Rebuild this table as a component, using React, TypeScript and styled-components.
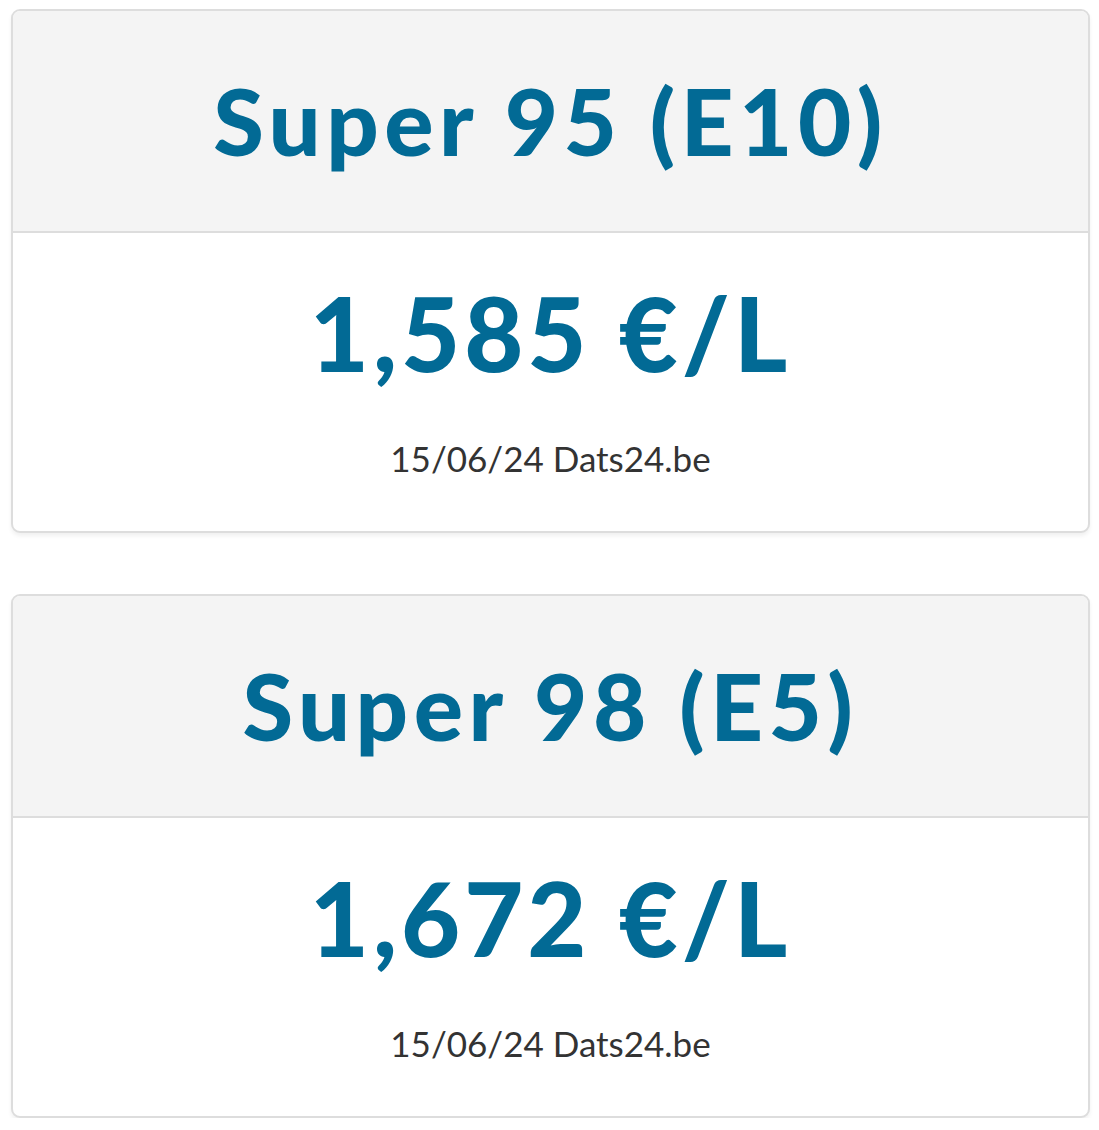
import React from 'react';
import styled, {createGlobalStyle} from "styled-components";

const GlobalStyle = createGlobalStyle`
    body {
        margin: 0;
        background: #ffffff;
        font-family: Lato, "Open Sans", sans-serif;
    }
`

type Fuel = {
    name: string;
    price: string;
    date: string;
    source: string;
}

const fuels: Fuel[] = [
    {name: "Super 95 (E10)", price: "1,585 €/L", date: "15/06/24", source: "Dats24.be"},
    {name: "Super 98 (E5)", price: "1,672 €/L", date: "15/06/24", source: "Dats24.be"},
];

export default function App() {
    return (
        <>
            <GlobalStyle/>
            <Page>
                {fuels.map((fuel) => (
                    <Card key={fuel.name}>
                        <CardHeader>
                            <Title>{fuel.name}</Title>
                        </CardHeader>
                        <CardBody>
                            <Price>{fuel.price}</Price>
                            <Meta>{fuel.date} {fuel.source}</Meta>
                        </CardBody>
                    </Card>
                ))}
            </Page>
        </>
    );
};

const Page = styled.div`
    display: flex;
    flex-direction: column;
    gap: 61px;
    padding: 9px 9px 0 11px;
`

const Card = styled.div`
    border: 2px solid #dddddd;
    border-radius: 9px;
    overflow: hidden;
    background: #ffffff;
    box-shadow: 0 3px 4px rgba(0, 0, 0, 0.06);
`

const CardHeader = styled.div`
    height: 220px;
    display: flex;
    align-items: center;
    justify-content: center;
    background: #f4f4f4;
    border-bottom: 2px solid #dddddd;
`

const Title = styled.h2`
    margin: 0;
    font-family: Lato, sans-serif;
    font-weight: 900;
    font-size: 92px;
    letter-spacing: 5.5px;
    line-height: 1;
    color: #026a95;
`

const CardBody = styled.div`
    height: 298px;
    display: flex;
    flex-direction: column;
    align-items: center;
    padding-top: 49px;
    box-sizing: border-box;
`

const Price = styled.div`
    font-family: Lato, sans-serif;
    font-weight: 900;
    font-size: 102px;
    letter-spacing: 4px;
    line-height: 1;
    color: #026a95;
`

const Meta = styled.div`
    margin-top: 57px;
    font-family: Lato, sans-serif;
    font-size: 35px;
    line-height: 1;
    color: #333333;
`
